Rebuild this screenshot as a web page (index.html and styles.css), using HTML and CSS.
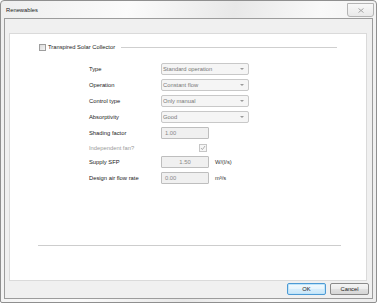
FILE: index.html
```html
<!DOCTYPE html>
<html lang="en">
<head>
  <meta charset="UTF-8">
  <title>Renewables</title>
  <link rel="stylesheet" href="styles.css">
</head>
<body>
  <div class="window">
    <div class="titlebar">
      <span class="title">Renewables</span>
      <span class="close">
        <svg width="6" height="5" viewBox="0 0 6 5"><path d="M0.5 0.5 L5.5 4.5 M5.5 0.5 L0.5 4.5" stroke="#a6a6a6" stroke-width="1" fill="none"/></svg>
      </span>
    </div>
    <div class="client">
      <div class="panel">
        <div class="group-head">
          <span class="check"></span>
          <span class="group-title">Transpired Solar Collector</span>
          <span class="rule"></span>
        </div>
        <div class="form">
          <div class="row">
            <span class="label">Type</span>
            <div class="select"><span>Standard operation</span><i class="arrow"></i></div>
          </div>
          <div class="row">
            <span class="label">Operation</span>
            <div class="select"><span>Constant flow</span><i class="arrow"></i></div>
          </div>
          <div class="row">
            <span class="label">Control type</span>
            <div class="select"><span>Only manual</span><i class="arrow"></i></div>
          </div>
          <div class="row">
            <span class="label">Absorptivity</span>
            <div class="select"><span>Good</span><i class="arrow"></i></div>
          </div>
          <div class="row">
            <span class="label">Shading factor</span>
            <div class="field">1.00</div>
          </div>
          <div class="row short">
            <span class="label muted">Independent fan?</span>
            <span class="tick">
              <svg width="6" height="6" viewBox="0 0 6 6"><path d="M1 3 L2.4 4.6 L5 1" stroke="#a8a8a8" stroke-width="0.9" fill="none"/></svg>
            </span>
          </div>
          <div class="row">
            <span class="label">Supply SFP</span>
            <div class="field center">1.50</div>
            <span class="unit">W/(l/s)</span>
          </div>
          <div class="row">
            <span class="label">Design air flow rate</span>
            <div class="field">0.00</div>
            <span class="unit">m³/s</span>
          </div>
        </div>
        <div class="bottom-rule"></div>
      </div>
      <div class="buttons">
        <button class="btn ok">OK</button>
        <button class="btn">Cancel</button>
      </div>
    </div>
  </div>
</body>
</html>
```

FILE: styles.css
```css
body{
	margin: 0;
	background: #fff;
	font-family: "Liberation Sans", Arial, sans-serif;
	font-size: 5.8px;
	color: #222;
}
.window{
	width: 377px;
	height: 303px;
	box-sizing: border-box;
	border: 1px solid #8f8f8f;
	border-radius: 4px 4px 2px 2px;
	padding: 0 3px 3px 3px;
	background: linear-gradient(100deg, #eeeeee, #fbfbfb 30%, #e8e8e8 55%, #f9f9f9 75%, #ededed);
	display: flex;
	flex-direction: column;
}
.titlebar{
	height: 17px;
	display: flex;
	align-items: center;
	padding-left: 2px;
}
.close{
	margin-left: auto;
	margin-right: -1px;
	align-self: flex-start;
	margin-top: 2px;
	width: 27px;
	height: 14px;
	box-sizing: border-box;
	border: 1px solid #b4b4b4;
	border-radius: 0 0 3px 3px;
	background: linear-gradient(#f8f8f8, #e9e9e9);
	display: flex;
	align-items: center;
	justify-content: center;
}
.client{
	flex: 1;
	border: 1px solid #9c9c9c;
	background: #f0f0f0;
	display: flex;
	flex-direction: column;
}
.panel{
	margin: 14px 5px 0 4px;
	height: 248px;
	box-sizing: border-box;
	border: 1px solid #dadada;
	background: #fff;
	display: flex;
	flex-direction: column;
}
.group-head{
	display: flex;
	align-items: center;
	height: 8px;
	margin: 9px 29px 0 29px;
}
.check{
	width: 7px;
	height: 7px;
	box-sizing: border-box;
	border: 1px solid #9e9e9e;
	background: linear-gradient(135deg, #dcdcdc, #f4f4f4);
}
.group-title{
	margin-left: 2px;
}
.rule{
	flex: 1;
	margin-left: 6px;
	border-top: 1px solid #cfcfcf;
}
.form{
	margin: 12px 0 0 79px;
}
.row{
	display: flex;
	align-items: center;
	height: 12px;
	margin-bottom: 4px;
}
.row.short{
	height: 9px;
}
.label{
	width: 72px;
}
.muted{
	color: #9a9a9a;
}
.select{
	width: 88px;
	height: 12px;
	box-sizing: border-box;
	border: 1px solid #c8c8c8;
	border-radius: 2px;
	background: #f5f5f5;
	color: #777;
	padding: 0 4px 0 1px;
	display: flex;
	align-items: center;
	justify-content: space-between;
}
.arrow{
	width: 0;
	height: 0;
	border-left: 2px solid transparent;
	border-right: 2px solid transparent;
	border-top: 2px solid #9a9a9a;
}
.field{
	width: 48px;
	height: 12px;
	box-sizing: border-box;
	border: 1px solid #bebebe;
	border-radius: 1px;
	background: #f0f0f0;
	color: #888;
	padding-left: 3px;
	display: flex;
	align-items: center;
}
.field.center{
	justify-content: center;
	padding-left: 0;
}
.tick{
	margin-left: 38px;
	width: 8px;
	height: 8px;
	box-sizing: border-box;
	border: 1px solid #c6c6c6;
	background: #f6f6f6;
	display: flex;
	align-items: center;
	justify-content: center;
}
.unit{
	margin-left: 6px;
	color: #333;
}
.bottom-rule{
	margin: auto 25px 34px 28px;
	border-top: 1px solid #cdcdcd;
}
.buttons{
	display: flex;
	justify-content: flex-end;
	gap: 4px;
	padding: 2px 3px 0 0;
}
.btn{
	width: 39px;
	height: 12px;
	padding: 0;
	box-sizing: border-box;
	border: 1px solid #8a8a8a;
	border-radius: 2px;
	background: linear-gradient(#f4f4f4, #ececec 50%, #e0e0e0 51%, #d6d6d6);
	font-family: "Liberation Sans", Arial, sans-serif;
	font-size: 5.8px;
	color: #222;
}
.btn.ok{
	border-color: #4d9ad4;
	background: linear-gradient(#f2f9fd, #e6f4fc 50%, #d6edfb 51%, #c9e6f8);
	box-shadow: inset 0 0 0 1px #bfe4fa;
}
```
